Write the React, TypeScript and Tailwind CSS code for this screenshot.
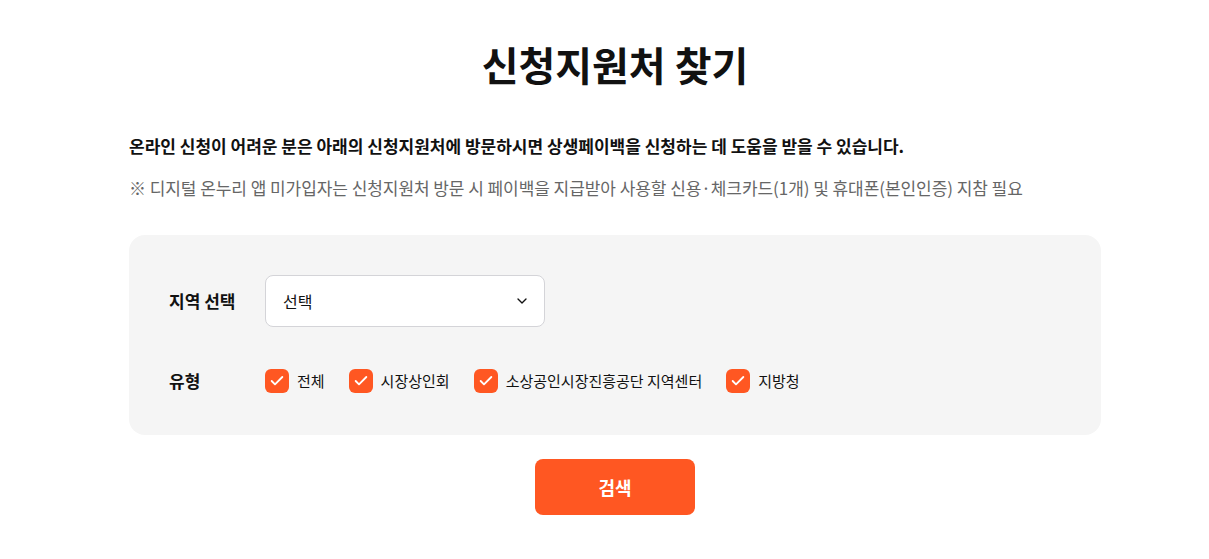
import { ChevronDown, Check } from 'lucide-react';

const TYPES = ['전체', '시장상인회', '소상공인시장진흥공단 지역센터', '지방청'];

export default function App() {
  return (
    <div
      className="min-h-screen bg-white text-[#111]"
      style={{ fontFamily: '"Noto Sans CJK KR", "Noto Sans", sans-serif' }}
    >
      <div className="ml-[129px] w-[972px] pt-[35px]">
        <h1 className="text-center text-[40px] font-bold leading-[58px]">
          신청지원처 찾기
        </h1>

        <p className="mt-[41px] text-[17px] font-bold leading-[24px]">
          온라인 신청이 어려운 분은 아래의 신청지원처에 방문하시면 상생페이백을 신청하는 데 도움을 받을 수 있습니다.
        </p>
        <p className="mt-[18px] text-[17px] leading-[24px] tracking-[-0.06px] text-[#666]">
          ※ 디지털 온누리 앱 미가입자는 신청지원처 방문 시 페이백을 지급받아 사용할 신용·체크카드(1개) 및 휴대폰(본인인증) 지참 필요
        </p>

        <div className="mt-[35px] rounded-[16px] bg-[#f5f5f5] px-[40px] pt-[40px] pb-[42px]">
          <div className="flex items-center">
            <span className="w-[96px] text-[17px] font-bold">지역 선택</span>
            <div className="flex h-[52px] w-[280px] items-center justify-between rounded-[8px] border border-[#d4d4d8] bg-white pl-[17px] pr-[14px]">
              <span className="text-[16px]">선택</span>
              <ChevronDown size={16} strokeWidth={2} />
            </div>
          </div>

          <div className="mt-[42px] flex h-[24px] items-center">
            <span className="w-[96px] text-[17px] font-bold">유형</span>
            <div className="flex items-center gap-[24px]">
              {TYPES.map((t) => (
                <label key={t} className="flex items-center gap-[8px]">
                  <span className="flex h-[24px] w-[24px] items-center justify-center rounded-[6px] bg-[#ff5722]">
                    <Check size={16} strokeWidth={2.75} className="text-white" />
                  </span>
                  <span className="text-[15px]">{t}</span>
                </label>
              ))}
            </div>
          </div>
        </div>

        <div className="mt-[24px] flex justify-center">
          <button className="h-[56px] w-[160px] rounded-[8px] bg-[#ff5722] text-[18px] font-bold text-white">
            검색
          </button>
        </div>
      </div>
    </div>
  );
}
